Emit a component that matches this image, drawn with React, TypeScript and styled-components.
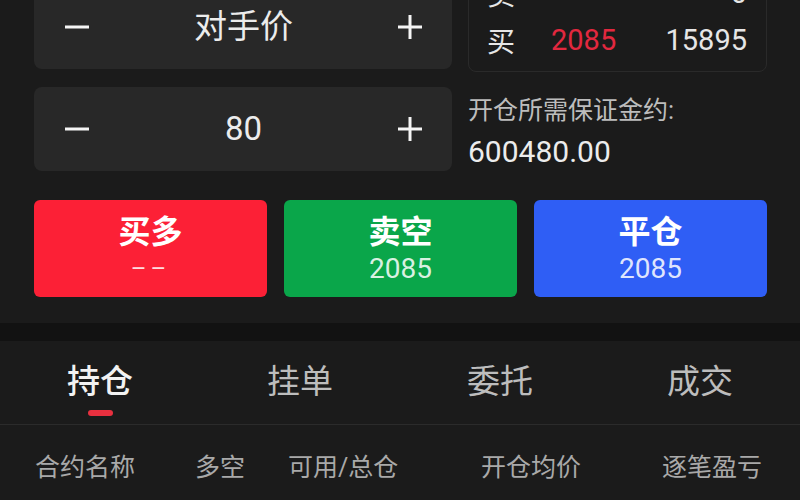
import React from "react";
import styled, { createGlobalStyle } from "styled-components";

const Global = createGlobalStyle`
  html, body {
    margin: 0;
    padding: 0;
    background: #1b1b1b;
    width: 800px;
    height: 500px;
    overflow: hidden;
  }
  * { box-sizing: border-box; }
  body {
    font-family: Roboto, "Noto Sans CJK SC", sans-serif;
    -webkit-font-smoothing: antialiased;
  }
`;

const Page = styled.div`
  width: 800px;
  display: flex;
  flex-direction: column;
  background: #121212;
`;

const TradePanel = styled.section`
  flex-shrink: 0;
  margin-top: -42px;
  background: #1b1b1b;
  padding: 0 33px 26px 34px;
  display: flex;
  flex-direction: column;
  gap: 29px;
`;

const TopGrid = styled.div`
  display: grid;
  grid-template-columns: 418px 1fr;
  column-gap: 16px;
  align-items: end;
`;

const InputColumn = styled.div`
  display: flex;
  flex-direction: column;
  gap: 18px;
`;

const Stepper = styled.div`
  height: 84px;
  background: #282828;
  border-radius: 8px;
  display: flex;
  align-items: center;
  justify-content: space-between;
  padding: 0 30px 0 31px;
`;

const StepButton = styled.span`
  width: 24px;
  height: 24px;
  display: flex;
  align-items: center;
  justify-content: center;
  color: #f5f5f5;
`;

const StepValue = styled.span`
  font-size: 33px;
  line-height: 40px;
  color: #ececec;
`;

const InfoColumn = styled.div`
  display: flex;
  flex-direction: column;
`;

const Book = styled.div`
  border: 1px solid #2a2a2a;
  border-radius: 8px;
  padding: 10px 19px 8px 18px;
  display: flex;
  flex-direction: column;
`;

const BookRow = styled.div`
  height: 47px;
  display: grid;
  grid-template-columns: 64px 1fr auto;
  align-items: center;
  font-size: 29px;
  color: #e6e6e6;
`;

const BookSide = styled.span`
  font-size: 28px;
`;

const BookPrice = styled.span<{ $tone?: "up" | "muted" }>`
  color: ${(p) => (p.$tone === "up" ? "#e2283f" : "#9a9a9a")};
`;

const BookVolume = styled.span`
  text-align: right;
`;

const MarginLabel = styled.div`
  margin-top: 23px;
  font-size: 25px;
  line-height: 32px;
  color: #bdbdbd;
`;

const MarginValue = styled.div`
  margin-top: 6px;
  font-size: 30px;
  line-height: 38px;
  color: #ececec;
`;

const ActionRow = styled.div`
  display: grid;
  grid-template-columns: repeat(3, 1fr);
  gap: 17px;
`;

const ActionButton = styled.button<{ $bg: string }>`
  height: 97px;
  border: none;
  border-radius: 6px;
  background: ${(p) => p.$bg};
  display: flex;
  flex-direction: column;
  align-items: center;
  justify-content: center;
  padding: 2px 0 0;
  font-family: inherit;
  color: #ffffff;
`;

const ActionTitle = styled.span`
  font-size: 32px;
  line-height: 38px;
  font-weight: 700;
`;

const ActionSub = styled.span<{ $dash?: boolean }>`
  font-size: ${(p) => (p.$dash ? "24px" : "28px")};
  line-height: 36px;
  letter-spacing: ${(p) => (p.$dash ? "4px" : "normal")};
  color: rgba(255, 255, 255, 0.86);
`;

const Divider = styled.div`
  flex-shrink: 0;
  height: 18px;
  background: #121212;
`;

const Positions = styled.section`
  flex-shrink: 0;
  background: #1b1b1b;
  display: flex;
  flex-direction: column;
`;

const Tabs = styled.div`
  display: grid;
  grid-template-columns: repeat(4, 1fr);
  border-bottom: 1px solid #2b2b2b;
  height: 84px;
`;

const Tab = styled.div<{ $active?: boolean }>`
  display: flex;
  flex-direction: column;
  align-items: center;
  padding-top: 21px;
  font-size: 33px;
  line-height: 40px;
  font-weight: ${(p) => (p.$active ? 500 : 400)};
  color: ${(p) => (p.$active ? "#f2f2f2" : "#bdbdbd")};
`;

const TabMark = styled.span`
  margin-top: 8px;
  width: 25px;
  height: 6px;
  border-radius: 3px;
  background: #e8303f;
`;

const HeaderRow = styled.div`
  height: 80px;
  display: grid;
  grid-template-columns: 160px 93px 193px 181px 1fr;
  align-items: center;
  padding-left: 35px;
  font-size: 25px;
  color: #a9a9a9;
`;

const Minus = () => (
  <svg width="24" height="24" viewBox="0 0 24 24">
    <rect x="0" y="10.5" width="24" height="3" fill="currentColor" />
  </svg>
);

const Plus = () => (
  <svg width="24" height="24" viewBox="0 0 24 24">
    <rect x="0" y="10.5" width="24" height="3" fill="currentColor" />
    <rect x="10.5" y="0" width="3" height="24" fill="currentColor" />
  </svg>
);

const tabs = ["持仓", "挂单", "委托", "成交"];
const headers = ["合约名称", "多空", "可用/总仓", "开仓均价", "逐笔盈亏"];

export default function App() {
  return (
    <>
      <Global />
      <Page>
        <TradePanel>
          <TopGrid>
            <InputColumn>
              <Stepper>
                <StepButton><Minus /></StepButton>
                <StepValue>对手价</StepValue>
                <StepButton><Plus /></StepButton>
              </Stepper>
              <Stepper>
                <StepButton><Minus /></StepButton>
                <StepValue>80</StepValue>
                <StepButton><Plus /></StepButton>
              </Stepper>
            </InputColumn>
            <InfoColumn>
              <Book>
                <BookRow>
                  <BookSide>卖</BookSide>
                  <BookPrice $tone="muted">--</BookPrice>
                  <BookVolume>0</BookVolume>
                </BookRow>
                <BookRow>
                  <BookSide>买</BookSide>
                  <BookPrice $tone="up">2085</BookPrice>
                  <BookVolume>15895</BookVolume>
                </BookRow>
              </Book>
              <MarginLabel>开仓所需保证金约:</MarginLabel>
              <MarginValue>600480.00</MarginValue>
            </InfoColumn>
          </TopGrid>
          <ActionRow>
            <ActionButton $bg="#fc2036">
              <ActionTitle>买多</ActionTitle>
              <ActionSub $dash>––</ActionSub>
            </ActionButton>
            <ActionButton $bg="#0aa64a">
              <ActionTitle>卖空</ActionTitle>
              <ActionSub>2085</ActionSub>
            </ActionButton>
            <ActionButton $bg="#2f5ef5">
              <ActionTitle>平仓</ActionTitle>
              <ActionSub>2085</ActionSub>
            </ActionButton>
          </ActionRow>
        </TradePanel>
        <Divider />
        <Positions>
          <Tabs>
            {tabs.map((t, i) => (
              <Tab key={t} $active={i === 0}>
                {t}
                {i === 0 && <TabMark />}
              </Tab>
            ))}
          </Tabs>
          <HeaderRow>
            {headers.map((h) => (
              <span key={h}>{h}</span>
            ))}
          </HeaderRow>
        </Positions>
      </Page>
    </>
  );
}
